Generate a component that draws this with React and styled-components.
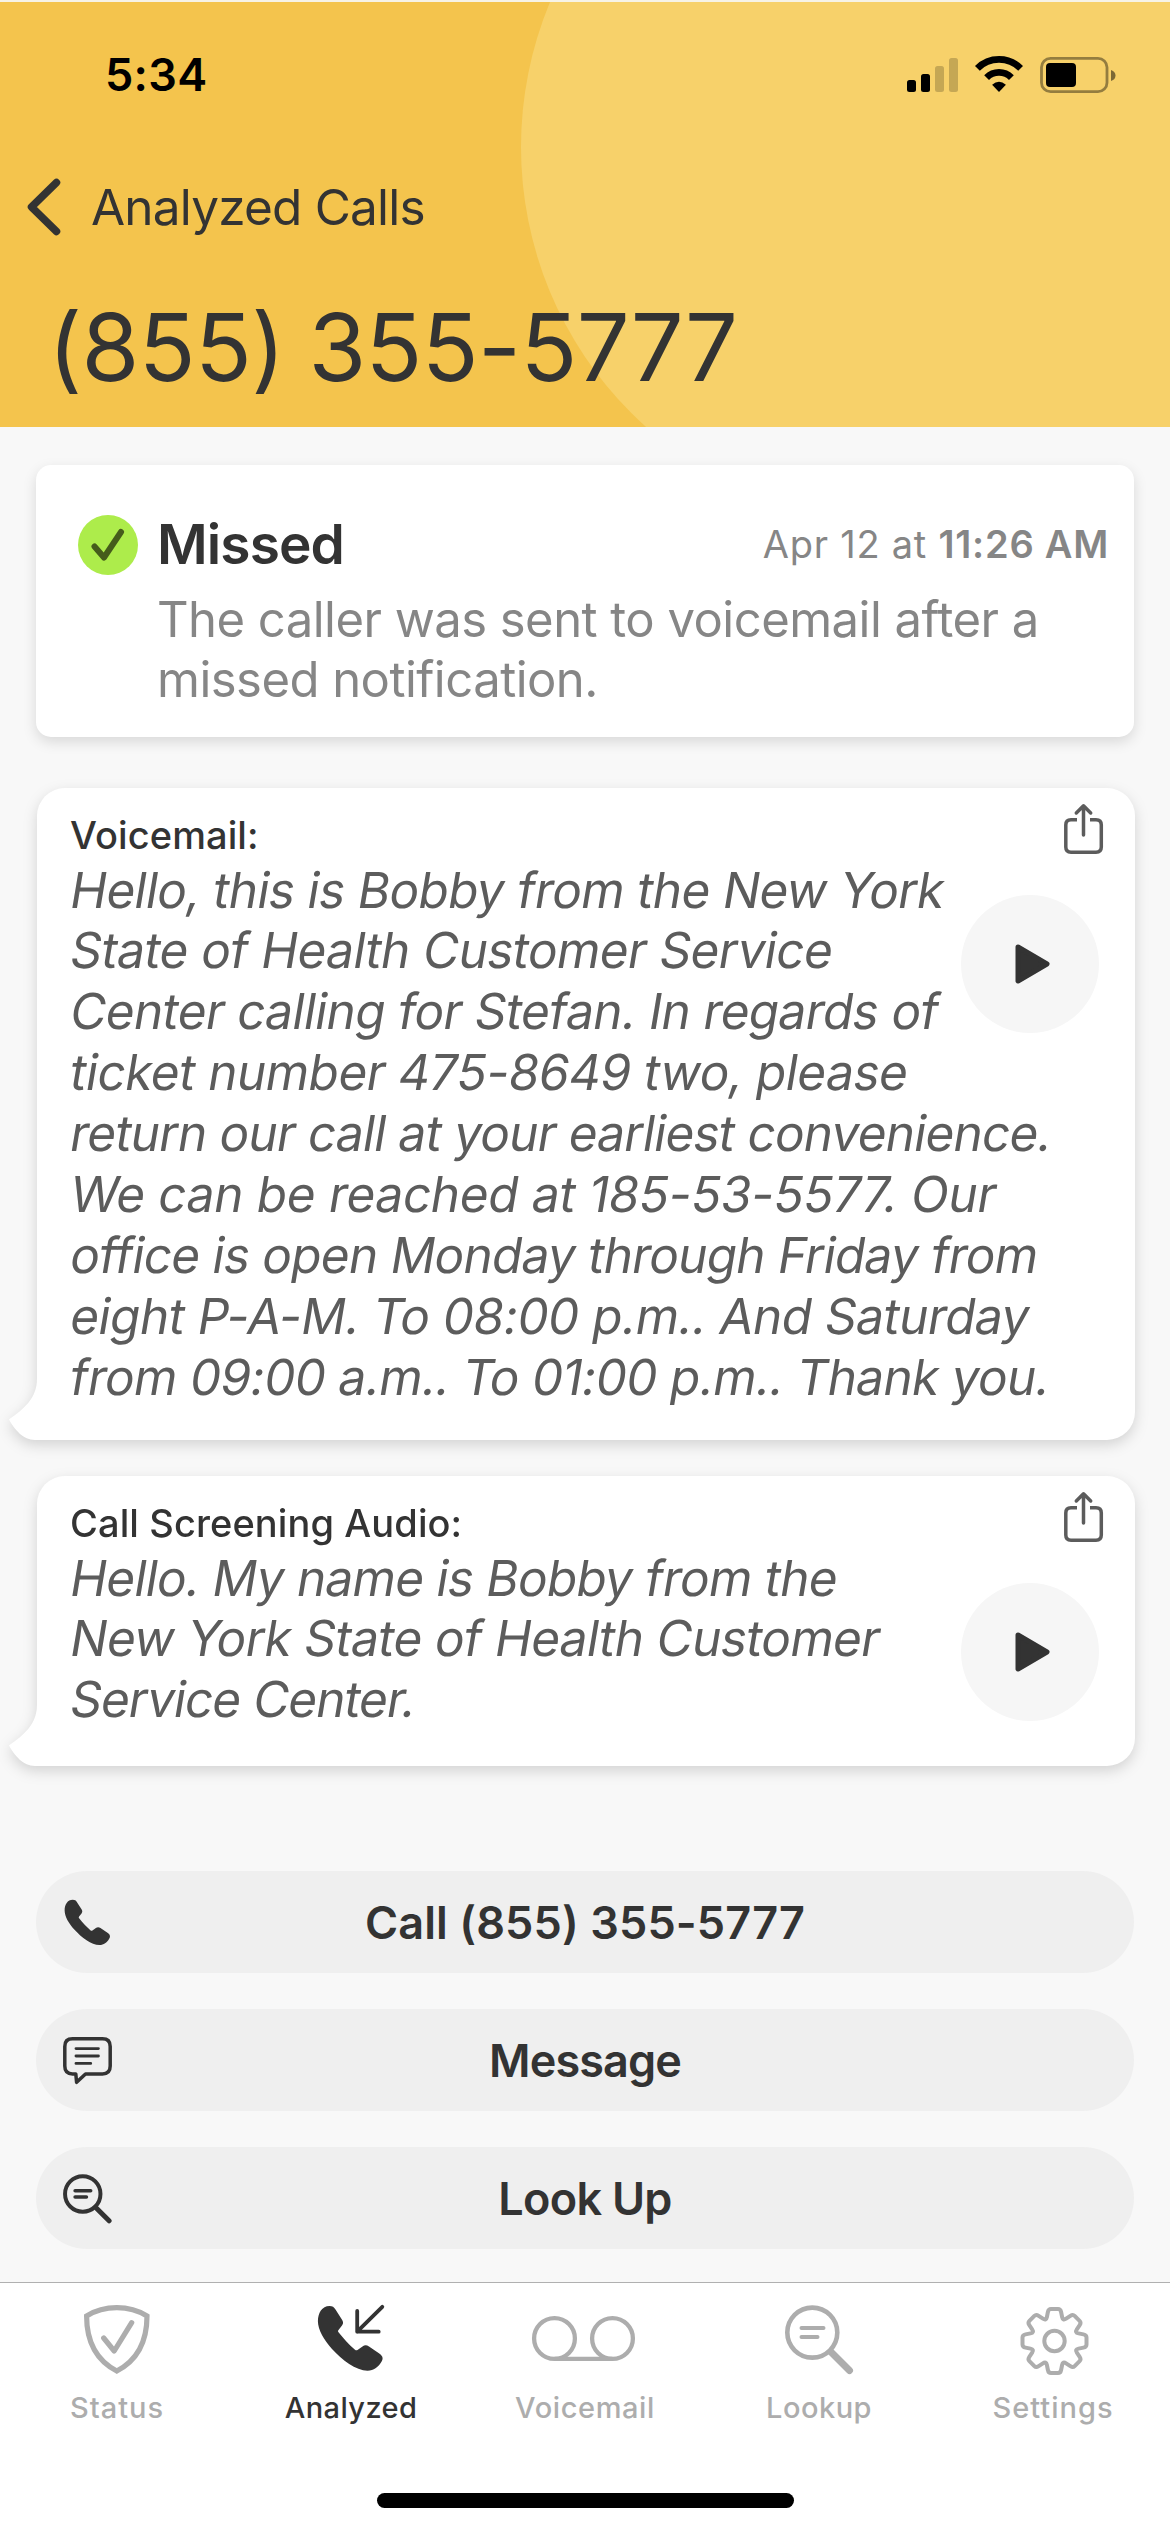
import React from "react"
import styled, { createGlobalStyle } from "styled-components"

const voicemailLines = [
    { text: "Hello, this is Bobby from the New York", ls: -0.64 },
    { text: "State of Health Customer Service", ls: -0.6 },
    { text: "Center calling for Stefan. In regards of", ls: -0.63 },
    { text: "ticket number 475-8649 two, please", ls: -0.5 },
    { text: "return our call at your earliest convenience.", ls: -0.77 },
    { text: "We can be reached at 185-53-5577. Our", ls: -0.32 },
    { text: "office is open Monday through Friday from", ls: -0.74 },
    { text: "eight P-A-M. To 08:00 p.m.. And Saturday", ls: -0.52 },
    { text: "from 09:00 a.m.. To 01:00 p.m.. Thank you.", ls: -0.67 },
]

const screeningLines = [
    { text: "Hello. My name is Bobby from the", ls: -0.74 },
    { text: "New York State of Health Customer", ls: -0.63 },
    { text: "Service Center.", ls: -1 },
]

const PHONE = "M13.5 3C6 3 1.9 10 1.9 18.3C2 27 8 37 16 46C26 57 40 67.7 51.5 67.7C58 67.7 62 64 65 59.5C67.5 56 67 53.5 64 51L53 43.5C50.5 41.8 48.5 42 46.5 43.5L41.5 47Q40.3 47.8 39 46.8C33 41.5 27 35 22.3 29Q21.5 28 22.5 27L26 22.5C27.5 20.5 27.3 19 26.2 17L19.5 6.5C18 4 16.5 3 13.5 3Z"

// one tooth is described pointing up, then turned eight times
const gearPath = () => {
    const tooth = [[-7.6, -24], [-6.6, -29], [-6, -32], [-3.5, -32], [3.5, -32], [6, -32], [6.6, -29], [7.6, -24]]
    let d = ""
    for (let k = 0; k < 8; k++) {
        const a = (k * Math.PI) / 4
        const p = tooth.map(([x, y]) => `${(x * Math.cos(a) - y * Math.sin(a)).toFixed(2)} ${(x * Math.sin(a) + y * Math.cos(a)).toFixed(2)}`)
        const b = a + Math.PI / 8
        const valley = `${(21.8 * Math.sin(b)).toFixed(2)} ${(-21.8 * Math.cos(b)).toFixed(2)}`
        d += `${k === 0 ? "M" : ""}${p[0]}L${p[1]}Q${p[2]} ${p[3]}L${p[4]}Q${p[5]} ${p[6]}L${p[7]}Q${valley} `
    }
    return d + "-7.6 -24Z"
}

const StatusIcons = ()=>(
    <svg width="212" height="40" viewBox="905 54 212 40">
        <rect x="907" y="79" width="9" height="12" rx="2.5"/>
        <rect x="921" y="73" width="9" height="18" rx="2.5"/>
        <rect x="935" y="65" width="9" height="26" rx="2.5" opacity="0.2"/>
        <rect x="949" y="57" width="9" height="34" rx="2.5" opacity="0.2"/>
        <g transform="translate(975 55)">
            <path d="M2.4 12.4A30.5 30.5 0 0 1 45.6 12.4M11.6 21.6A17.5 17.5 0 0 1 36.4 21.6" fill="none" stroke="#000" strokeWidth="6.8"/>
            <path d="M24 36L17.1 28.8Q24 22.5 30.9 28.8Z"/>
        </g>
        <rect x="1041.5" y="57.3" width="65.5" height="33.4" rx="9" fill="none" stroke="#000" strokeWidth="2.8" opacity="0.4"/>
        <path d="M1111 69Q1115.5 70.5 1115.5 74.5T1111 80Z" opacity="0.5"/>
        <rect x="1046" y="62" width="30" height="24" rx="4"/>
    </svg>
)

const ShareIcon = ()=>(
    <svg width="43" height="54" viewBox="0 0 43 54" fill="none" stroke="#5c5c5c" strokeWidth="3.5">
        <path d="M15 17.8H9Q3.8 17.8 3.8 23V45Q3.8 50.2 9 50.2H34Q39.3 50.2 39.3 45V23Q39.3 17.8 34 17.8H28"/>
        <path d="M21.5 4V33M14.3 11L21.5 3.8L28.7 11" strokeLinecap="round" strokeLinejoin="round"/>
    </svg>
)

const MessageIcon = ()=>(
    <svg width="53" height="51" viewBox="0 0 53 51" fill="none" stroke="#333" strokeWidth="3.5" strokeLinejoin="round" strokeLinecap="round">
        <path d="M14.8 38.9H11.5Q3.8 38.9 3.8 31V11.5Q3.8 3.8 11.5 3.8H41.5Q49.2 3.8 49.2 11.5V31Q49.2 38.9 41.5 38.9H24.5L15.6 47.3Z"/>
        <path d="M15 13.6H37.4M15 21H37.4M15 28.4H29.7" strokeWidth="2.9"/>
    </svg>
)

const LookupIcon = ({size, color, w})=>(
    <svg width={size} height={size} viewBox="0 0 72 72" fill="none" stroke={color} strokeLinecap="round">
        <circle cx="29.3" cy="29.6" r="25" strokeWidth={w}/>
        <path d="M18.5 25H40.5M18.5 34H34.5" strokeWidth={w - 0.6}/>
        <path d="M48 49L66.5 67.5" strokeWidth="7"/>
    </svg>
)

const Bubble = ({title, lines, h})=>{
    return(
        <BubbleBox h={h}>
            <Tail width="30" height="62" viewBox="0 0 30 62">
                <path d="M30 0H28C28 19 15 30 0 40.5C6 51 14 61 26 61H30Z" fill="#fff"/>
            </Tail>
            <Controls>
                <ShareIcon/>
                <PlayButton>
                    <svg width="38" height="42" viewBox="0 0 38 42">
                        <path d="M4 4L33 21L4 38Z" fill="#333" stroke="#333" strokeWidth="5" strokeLinejoin="round"/>
                    </svg>
                </PlayButton>
            </Controls>
            <BubbleTitle>{title}</BubbleTitle>
            {lines.map((l)=>(
                <Line key={l.text} ls={l.ls}>{l.text}</Line>
            ))}
        </BubbleBox>
    )
}

const App = ()=>{
    return(
        <Screen>
            <GlobalStyle/>
            <Header>
                <Glow/>
                <StatusBar>
                    <Clock>5:34</Clock>
                    <StatusIcons/>
                </StatusBar>
                <NavRow>
                    <svg width="36" height="60" viewBox="0 0 36 60">
                        <path d="M31.5 5.5L6.5 30L31.5 54.5" fill="none" stroke="#333" strokeWidth="7.5" strokeLinecap="round" strokeLinejoin="round"/>
                    </svg>
                    <NavText>Analyzed Calls</NavText>
                </NavRow>
                <Title>(855) 355-5777</Title>
            </Header>
            <Content>
                <Card>
                    <CardTop>
                        <svg width="60" height="60" viewBox="0 0 60 60">
                            <circle cx="30" cy="30" r="30" fill="#adec4b"/>
                            <path d="M16.5 31.5L26 42.5L43 17" fill="none" stroke="#455c1b" strokeWidth="6" strokeLinecap="round" strokeLinejoin="round"/>
                        </svg>
                        <State>Missed</State>
                        <When>Apr 12 at <b>11:26 AM</b></When>
                    </CardTop>
                    <Desc>The caller was sent to voicemail after a<br/>missed notification.</Desc>
                </Card>
                <Bubble title="Voicemail:" lines={voicemailLines} h={652}/>
                <Bubble title="Call Screening Audio:" lines={screeningLines} h={290}/>
                <Actions>
                    <Action ls={0.1}>
                        <ActionIcon>
                            <svg width="47" height="47" viewBox="1 2 67 67"><path d={PHONE} fill="#333"/></svg>
                        </ActionIcon>
                        Call (855) 355-5777
                    </Action>
                    <Action ls={-0.9}>
                        <ActionIcon><MessageIcon/></ActionIcon>
                        Message
                    </Action>
                    <Action ls={-0.7}>
                        <ActionIcon><LookupIcon size={51} color="#333" w={5.6}/></ActionIcon>
                        Look Up
                    </Action>
                </Actions>
            </Content>
            <TabBar>
                <Tab>
                    <TabIcon>
                        <svg width="70" height="72" viewBox="0 0 70 72" fill="none" stroke="#adadad" strokeWidth="5.2">
                            <path d="M4.6 13Q18 4.7 34.8 4.7Q51.6 4.7 65 13C65 40 54 58 34.8 68C15.6 58 4.6 40 4.6 13Z"/>
                            <path d="M21.7 35L32.2 48L49.7 19.7" strokeLinecap="round" strokeLinejoin="round"/>
                        </svg>
                    </TabIcon>
                    Status
                </Tab>
                <Tab active ls={0.4}>
                    <TabIcon>
                        <svg width="70" height="72" viewBox="0 0 70 72">
                            <path d={PHONE} fill="#333"/>
                            <path d="M66.3 3.8L41.2 28.7M41.2 8V28.7H62.7" fill="none" stroke="#333" strokeWidth="3.8" strokeLinecap="round" strokeLinejoin="round"/>
                        </svg>
                    </TabIcon>
                    Analyzed
                </Tab>
                <Tab ls={0.6}>
                    <TabIcon>
                        <svg width="108" height="72" viewBox="0 0 108 72" fill="none" stroke="#adadad" strokeWidth="4.3">
                            <circle cx="23.5" cy="35.5" r="20.4"/>
                            <circle cx="81.5" cy="35.5" r="20.4"/>
                            <path d="M23.5 55.9H81.5"/>
                        </svg>
                    </TabIcon>
                    Voicemail
                </Tab>
                <Tab ls={0.5}>
                    <TabIcon><LookupIcon size={72} color="#adadad" w={4.6}/></TabIcon>
                    Lookup
                </Tab>
                <Tab>
                    <TabIcon>
                        <svg width="72" height="72" viewBox="-37.5 -38 72 72" fill="none" stroke="#adadad" strokeWidth="4" strokeLinejoin="round">
                            <path d={gearPath()}/>
                            <circle r="10.2"/>
                        </svg>
                    </TabIcon>
                    Settings
                </Tab>
            </TabBar>
            <HomeArea><HomeLine/></HomeArea>
        </Screen>
    )
}
export default App

const GlobalStyle = createGlobalStyle`
body{
    margin: 0;
    background-color: #f8f8f8;
    font-family: Inter, "Liberation Sans", sans-serif;
    color: #333;
}
svg{
    display: block;
    flex-shrink: 0;
}
`

const HomeLine = styled.div`
width: 417px;
height: 15px;
border-radius: 8px;
background-color: #000;
`
const HomeArea = styled.div`
height: 39px;
display: flex;
justify-content: center;
background-color: #fff;
`
const TabIcon = styled.div`
height: 72px;
margin-bottom: 16px;
`
const Tab = styled.div`
width: 234px;
display: flex;
flex-direction: column;
align-items: center;
font-size: 29px;
line-height: 34px;
font-weight: 500;
letter-spacing: ${({ls})=>ls || 1}px;
color: ${({active})=>active?"#333": "#adadad"};
`
const TabBar = styled.div`
height: 190px;
padding-top: 20px;
display: flex;
box-sizing: content-box;
border-top: 1px solid #b0b0b0;
background-color: #fff;
`
const ActionIcon = styled.div`
width: 64px;
display: flex;
justify-content: center;
position: absolute;
left: 19px;
`
const Action = styled.div`
height: 102px;
border-radius: 51px;
display: flex;
align-items: center;
justify-content: center;
position: relative;
background-color: #efefef;
font-size: 45px;
font-weight: 600;
letter-spacing: ${({ls})=>ls || 0}px;
`
const Actions = styled.div`
margin-top: 105px;
display: flex;
flex-direction: column;
gap: 36px;
`
/* slanted roman letters, the italic face has other shapes for a and f */
const Line = styled.div`
margin-left: -3px;
font-size: 49.5px;
line-height: 60.9px;
white-space: nowrap;
color: #5c5c5c;
transform: skewX(-9.5deg);
transform-origin: 0 48px;
letter-spacing: ${({ls})=>ls || 0}px;
`
const BubbleTitle = styled.div`
margin-left: -1px;
padding-top: 23px;
font-size: 38px;
line-height: 48.5px;
font-weight: 500;
letter-spacing: 0.1px;
`
const PlayButton = styled.div`
width: 138px;
height: 138px;
margin-right: 6px;
padding-left: 5px;
box-sizing: border-box;
border-radius: 50%;
display: flex;
align-items: center;
justify-content: center;
background-color: #f6f6f6;
`
const Controls = styled.div`
float: right;
padding-top: 14px;
display: flex;
flex-direction: column;
align-items: flex-end;
gap: 39px;
`
const Tail = styled.svg`
position: absolute;
left: -28px;
bottom: -1px;
`
const BubbleBox = styled.div`
height: ${({h})=>h}px;
margin: 0 -1px 36px 1px;
padding: 0 30px 0 34px;
box-sizing: border-box;
position: relative;
border-radius: 28px 28px 28px 0;
background-color: #fff;
filter: drop-shadow(0 5px 7px rgb(0,0,0,0.15));
`
const Desc = styled.div`
padding-left: 121px;
font-size: 49px;
line-height: 60px;
letter-spacing: -0.53px;
color: #868686;
white-space: nowrap;
`
const When = styled.div`
margin-left: auto;
padding-bottom: 2px;
font-size: 38px;
letter-spacing: 0.75px;
color: #868686;
b{
    font-weight: 600;
}
`
const State = styled.div`
margin-left: 19px;
padding-bottom: 3px;
font-size: 55px;
font-weight: 600;
letter-spacing: -0.9px;
`
const CardTop = styled.div`
height: 60px;
margin-bottom: 15px;
padding: 0 25px 0 42px;
display: flex;
align-items: center;
`
const Card = styled.div`
height: 272px;
margin-bottom: 51px;
padding-top: 50px;
box-sizing: border-box;
border-radius: 15px;
background-color: #fff;
box-shadow: 0 5px 14px rgb(0,0,0,0.13);
`
const Content = styled.div`
height: 1855px;
padding: 38px 36px 0;
box-sizing: border-box;
`
const Title = styled.div`
height: 162px;
padding: 2px 0 0 48px;
box-sizing: border-box;
font-size: 93.5px;
line-height: 160px;
letter-spacing: -0.6px;
word-spacing: -2px;
position: relative;
`
const NavText = styled.div`
margin-left: 30px;
font-size: 49.5px;
letter-spacing: -0.8px;
`
const NavRow = styled.div`
height: 116px;
padding-left: 25px;
display: flex;
align-items: center;
position: relative;
`
const Clock = styled.div`
font-size: 45px;
font-weight: 600;
letter-spacing: 0.3px;
color: #000;
`
const StatusBar = styled.div`
height: 147px;
padding: 0 53px 2px 105px;
box-sizing: border-box;
display: flex;
align-items: center;
justify-content: space-between;
position: relative;
`
const Glow = styled.div`
width: 900px;
height: 752px;
border-radius: 376px 0 0 376px;
position: absolute;
left: 521px;
top: -231px;
background-color: #f7d16a;
`
const Header = styled.div`
height: 427px;
box-sizing: border-box;
border-top: 2px solid #f7f3e6;
position: relative;
overflow: hidden;
background-color: #f4c44d;
`
const Screen = styled.div`
width: 1170px;
height: 2532px;
overflow: hidden;
background-color: #f8f8f8;
`
